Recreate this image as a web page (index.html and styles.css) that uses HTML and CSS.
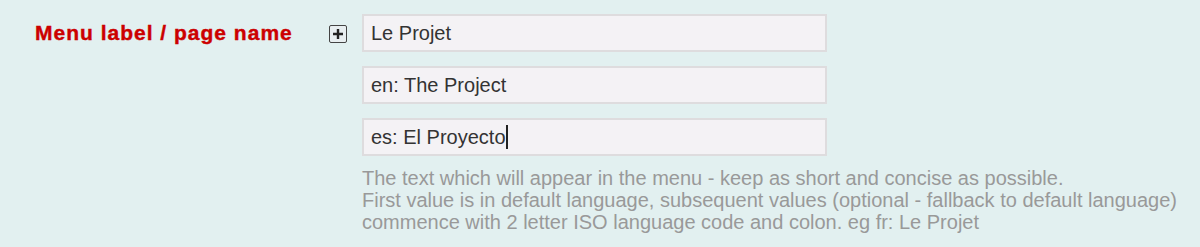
FILE: index.html
```html
<!DOCTYPE html>
<html lang="en">
<head>
    <meta charset="UTF-8">
    <title>Menu label</title>
    <link rel="stylesheet" href="styles.css">
</head>
<body>

<div class="form-row">
    <label class="field-label" for="menuLabel">Menu label / page name</label>

    <div class="field-toggle">
        <span class="plus-box">
            <svg width="12" height="12" viewBox="0 0 12 12">
                <path d="M6 1v10M1 6h10" stroke="#222" stroke-width="2.4"/>
            </svg>
        </span>
    </div>

    <div class="field-body">
        <input type="text" id="menuLabel" class="field-input" value="Le Projet">
        <input type="text" class="field-input" value="en: The Project">
        <div class="field-input fake-focus">es: El Proyecto<span class="caret"></span></div>

        <p class="field-help">
            The text which will appear in the menu - keep as short and concise as possible.<br>
            First value is in default language, subsequent values (optional - fallback to default language)<br>
            commence with 2 letter ISO language code and colon. eg fr: Le Projet
        </p>
    </div>
</div>

</body>
</html>
```

FILE: styles.css
```css
/* Page */
body {
    margin: 0;
    background-color: #e2f0f0;
    font-family: 'Liberation Sans', Arial, sans-serif;
}

.form-row {
    display: flex;
    padding: 14px 0 0 35px;
}

/* Label column */
.field-label {
    width: 294px;
    padding-top: 7px;
    color: #cc0000;
    font-weight: bold;
    font-size: 21px;
    letter-spacing: 1px;
    line-height: 24px;
    white-space: nowrap;
    -webkit-text-stroke: 0.4px #cc0000;
}

.field-toggle {
    width: 33px;
    padding-top: 11px;
}

.plus-box {
    display: flex;
    align-items: center;
    justify-content: center;
    width: 16px;
    height: 16px;
    border: 1px solid #444;
    border-radius: 2px;
    background: #e8eef0;
}

/* Inputs */
.field-body {
    display: flex;
    flex-direction: column;
    gap: 14px;
}

.field-input {
    box-sizing: border-box;
    width: 465px;
    height: 38px;
    margin: 0;
    padding: 0 7px;
    border: 2px solid #dedcde;
    background-color: #f4f2f5;
    color: #333;
    font-family: 'Liberation Sans', Arial, sans-serif;
    font-size: 20px;
    outline: none;
}

.fake-focus {
    display: flex;
    align-items: center;
}

.caret {
    display: inline-block;
    width: 2px;
    height: 24px;
    background: #222;
}

/* Help text */
.field-help {
    margin: -3px 0 0;
    color: #999;
    font-size: 20px;
    line-height: 22px;
}
```
